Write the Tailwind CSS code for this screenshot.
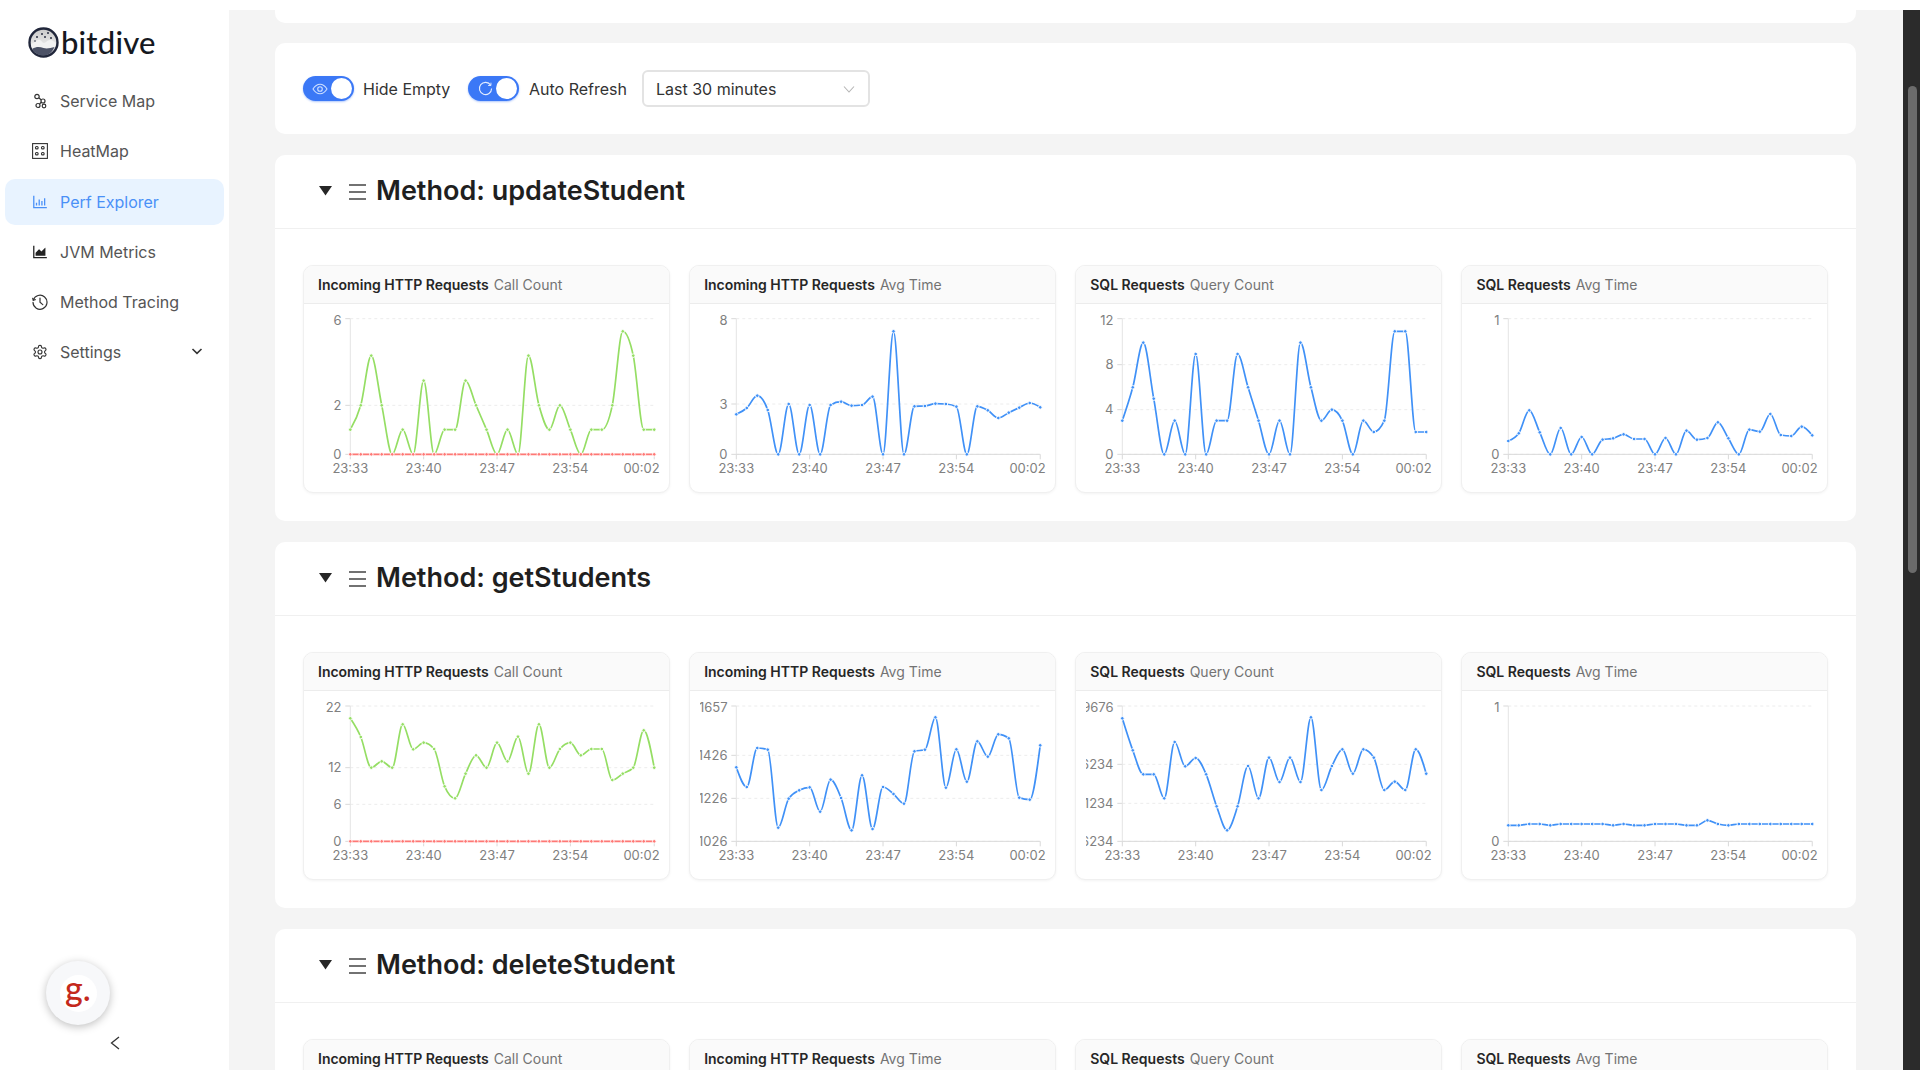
<!DOCTYPE html>
<html lang="en">
<head>
  <meta charset="UTF-8" />
  <title>bitdive - Perf Explorer</title>
  <script src="https://cdn.jsdelivr.net/npm/@tailwindcss/browser@4"></script>
</head>
<body class="bg-white font-[Inter,sans-serif] overflow-hidden">
  <div class="flex w-[1920px] h-[1080px] relative">
    <!-- sidebar -->
    <aside class="w-[229px] shrink-0 h-[1070px] flex flex-col bg-white">
      <div class="h-[76px] flex items-center pl-[28px] pt-[8px] gap-[2px]">
        <svg width="31" height="31" viewBox="0 0 31 31">
          <defs>
            <linearGradient id="sky" x1="0" y1="0" x2="0" y2="1">
              <stop offset="0" stop-color="#c9c9c9" />
              <stop offset="0.55" stop-color="#e6e6e6" />
              <stop offset="1" stop-color="#6d7180" />
            </linearGradient>
          </defs>
          <circle cx="15.5" cy="15.5" r="14" fill="url(#sky)" stroke="#20263a" stroke-width="2.4" />
          <path d="M3 17c4-1 6-5 9-4 2 .7 2 3 4 3s3-3 6-3 4 2 6 3c-.5 7-6 12-12.500 12S3 24 3 17z" fill="#f2f2f2" />
          <path d="M4 22c5-3 8-2 11.500-1s7 0 11-1c-2 5-6 8.500-11 8.500S6 26 4 22z" fill="#4c5266" />
          <g fill="#2a2f42">
            <circle cx="9" cy="10" r="1" /><circle cx="14" cy="7" r="1" /><circle cx="20" cy="6" r="1" />
            <circle cx="23" cy="11" r="1" /><circle cx="17" cy="10" r="1" /><circle cx="7" cy="14" r="0.8" />
          </g>
        </svg>
        <span class="text-[31px] leading-none font-medium text-[#15181f] tracking-[0.2px] font-[Lato,sans-serif]">bitdive</span>
      </div>
      <nav class="flex flex-col gap-[4.3px] px-[5px] mt-[2px] text-[16px] text-[#555555]">
        <a class="h-[46px] flex items-center rounded-[10px] pl-[27px] gap-[12px]">
          <svg class="w-[16px] h-[16px]" viewBox="0 0 16 16" fill="none" stroke="#333" stroke-width="1.200">
            <circle cx="5" cy="3.500" r="2.200" /><circle cx="11" cy="8" r="2" /><circle cx="6" cy="12.500" r="2" /><circle cx="12" cy="13" r="1.800" />
            <path d="M6.800 4.800 9.300 7M9.300 9.300 7.500 11" />
          </svg>
          Service Map
        </a>
        <a class="h-[46px] flex items-center rounded-[10px] pl-[27px] gap-[12px]">
          <svg class="w-[16px] h-[16px]" viewBox="0 0 16 16" fill="none" stroke="#333" stroke-width="1.100">
            <rect x="0.600" y="0.600" width="14.800" height="14.800" />
            <rect x="3.500" y="3.500" width="2.600" height="2.400" rx="1" /><rect x="9.500" y="3.500" width="2.600" height="2.400" rx="1" />
            <rect x="3.500" y="9.500" width="2.600" height="2.400" rx="1" /><rect x="9.500" y="9.500" width="2.600" height="2.400" rx="1" />
          </svg>
          HeatMap
        </a>
        <a class="h-[46px] flex items-center rounded-[10px] pl-[27px] gap-[12px] bg-[#e8f3ff] text-[#4a90f7]">
          <svg class="w-[16px] h-[16px]" viewBox="64 64 896 896" fill="#4a90f7">
            <path d="M888 792H200V168c0-4.400-3.600-8-8-8h-56c-4.400 0-8 3.600-8 8v688c0 4.400 3.600 8 8 8h752c4.400 0 8-3.600 8-8v-56c0-4.400-3.600-8-8-8zm-600-80h56c4.400 0 8-3.600 8-8V560c0-4.400-3.600-8-8-8h-56c-4.400 0-8 3.600-8 8v144c0 4.400 3.600 8 8 8zm152 0h56c4.400 0 8-3.600 8-8V384c0-4.400-3.600-8-8-8h-56c-4.400 0-8 3.600-8 8v320c0 4.400 3.600 8 8 8zm152 0h56c4.400 0 8-3.600 8-8V462c0-4.400-3.600-8-8-8h-56c-4.400 0-8 3.600-8 8v242c0 4.400 3.600 8 8 8zm152 0h56c4.400 0 8-3.600 8-8V304c0-4.400-3.600-8-8-8h-56c-4.400 0-8 3.600-8 8v400c0 4.400 3.600 8 8 8z" />
          </svg>
          Perf Explorer
        </a>
        <a class="h-[46px] flex items-center rounded-[10px] pl-[27px] gap-[12px]">
          <svg class="w-[16px] h-[16px]" viewBox="64 64 896 896" fill="#222">
            <path d="M888 792H200V168c0-4.400-3.600-8-8-8h-56c-4.400 0-8 3.600-8 8v688c0 4.400 3.600 8 8 8h752c4.400 0 8-3.600 8-8v-56c0-4.400-3.600-8-8-8zm-616-64h536c4.400 0 8-3.600 8-8V284c0-7.200-8.700-10.700-13.700-5.700L592 488.600l-125.400-124a8.030 8.030 0 00-11.300 0l-189 189.600a7.870 7.870 0 00-2.300 5.600V720c0 4.400 3.600 8 8 8z" />
          </svg>
          JVM Metrics
        </a>
        <a class="h-[46px] flex items-center rounded-[10px] pl-[27px] gap-[12px]">
          <svg class="w-[16px] h-[16px]" viewBox="0 0 16 16" fill="none" stroke="#333" stroke-width="1.200" stroke-linecap="round">
            <path d="M1.300 6.200A7 7 0 1 1 1 8.300" /><path d="M1 3.400v3h3" stroke-width="0" /><path d="M8 4v4.200l2.800 2.400" />
            <path d="M0.700 4.300 1.300 6.200 3.300 5.600" />
          </svg>
          Method Tracing
        </a>
        <a class="h-[46px] flex items-center rounded-[10px] pl-[27px] gap-[12px]">
          <svg class="w-[16px] h-[16px]" viewBox="0 0 24 24" fill="none" stroke="#333" stroke-width="1.700" stroke-linecap="round" stroke-linejoin="round">
            <path d="M12.220 2h-.44a2 2 0 0 0-2 2v.18a2 2 0 0 1-1 1.730l-.43.250a2 2 0 0 1-2 0l-.15-.080a2 2 0 0 0-2.730.730l-.22.380a2 2 0 0 0 .73 2.730l.15.100a2 2 0 0 1 1 1.720v.510a2 2 0 0 1-1 1.740l-.15.090a2 2 0 0 0-.73 2.730l.22.380a2 2 0 0 0 2.730.730l.15-.080a2 2 0 0 1 2 0l.43.250a2 2 0 0 1 1 1.730V20a2 2 0 0 0 2 2h.44a2 2 0 0 0 2-2v-.18a2 2 0 0 1 1-1.730l.43-.250a2 2 0 0 1 2 0l.15.080a2 2 0 0 0 2.730-.730l.22-.390a2 2 0 0 0-.73-2.730l-.15-.080a2 2 0 0 1-1-1.740v-.500a2 2 0 0 1 1-1.740l.15-.090a2 2 0 0 0 .73-2.730l-.22-.380a2 2 0 0 0-2.730-.730l-.15.080a2 2 0 0 1-2 0l-.43-.250a2 2 0 0 1-1-1.730V4a2 2 0 0 0-2-2z" />
            <circle cx="12" cy="12" r="3" />
          </svg>
          Settings
          <svg class="w-[12px] h-[12px] ml-auto mr-[21px] -mt-[3px]" viewBox="0 0 12 12" fill="none" stroke="#333" stroke-width="1.600">
            <path d="M1.500 4 6 8.300 10.500 4" />
          </svg>
        </a>
      </nav>
      <button class="mt-auto mb-[20px] self-center ml-[1px] h-[14px]">
        <svg class="w-[10px] h-[14px]" viewBox="0 0 10 14" fill="none" stroke="#333" stroke-width="1.300"><path d="M9 1 1.500 7 9 13" /></svg>
      </button>
    </aside>

    <!-- floating avatar -->
    <div class="absolute left-[46px] top-[961px] w-[64px] h-[64px] rounded-full bg-[#f7f8fa] shadow-[0_2px_8px_rgba(0,0,0,0.25)] flex items-center justify-center">
      <div class="w-[37px] h-[37px] rounded-full bg-white flex items-center justify-center text-[#c4291c] text-[34px] font-medium leading-none pb-[10px] font-[Lato,sans-serif]">g.</div>
    </div>

    <!-- content -->
    <main class="flex-1 h-[1060px] mt-[10px] overflow-hidden bg-[#f4f4f4] pl-[46px] pr-[47px] flex flex-col gap-[21px]">
      <div class="shrink-0 h-[13px] bg-white rounded-b-[10px]"></div>
      <section class="shrink-0 -mt-[1px] h-[91px] bg-white rounded-[10px] flex items-center pl-[28px] text-[16px] text-[#333333]">
        <span class="w-[51px] h-[25px] rounded-full bg-[#3b78f6] relative flex items-center shadow-[0_1px_2px_rgba(59,120,246,0.4)]">
          <svg class="ml-[9px] w-[16px] h-[16px]" viewBox="0 0 16 16" fill="none" stroke="#cfe0ff" stroke-width="1.100">
            <path d="M1 8c2-3.200 4.300-4.800 7-4.800S13 4.800 15 8c-2 3.200-4.300 4.800-7 4.800S3 11.200 1 8z" /><circle cx="8" cy="8" r="2.300" />
          </svg>
          <span class="absolute right-[2px] top-[2px] w-[21px] h-[21px] rounded-full bg-white"></span>
        </span>
        <span class="ml-[9px] w-[96px]">Hide Empty</span>
        <span class="ml-[9px] w-[51px] h-[25px] rounded-full bg-[#3b78f6] relative flex items-center shadow-[0_1px_2px_rgba(59,120,246,0.4)]">
          <svg class="ml-[10px] w-[15px] h-[15px]" viewBox="0 0 16 16" fill="none" stroke="#e3edff" stroke-width="1.200">
            <path d="M13.500 4.500A6.500 6.500 0 1 0 14.500 8" /><path d="M13.800 1.800v3h-3" stroke-width="1" />
          </svg>
          <span class="absolute right-[2px] top-[2px] w-[21px] h-[21px] rounded-full bg-white"></span>
        </span>
        <span class="ml-[10px] w-[113px]">Auto Refresh</span>
        <span class="w-[228px] h-[37px] rounded-[6px] border-2 border-[#e3e3e3] flex items-center pl-[12px] pr-[13px] justify-between">
          Last 30 minutes
          <svg class="w-[12px] h-[12px]" viewBox="0 0 12 12" fill="none" stroke="#b5b5b5" stroke-width="1.100"><path d="M1 3.500 6 9l5-5.500" /></svg>
        </span>
      </section>
      <div id="methods" class="contents"></div>
    </main>

    <!-- window scrollbar -->
    <div class="w-[17px] h-[1060px] mt-[10px] bg-[#2b2b2b] pt-[76px] pl-[5px]">
      <div class="w-[9px] h-[487px] rounded-full bg-[#6b6b6b]"></div>
    </div>
  </div>

  <script>
    const TIMES = [[0, '23:33'], [7, '23:40'], [14, '23:47'], [21, '23:54'], [29, '00:02']];
    const X0 = 46.3, DX = 10.48;

    // y values are pixel rows read off the reference (3x), per chart
    const ROW1 = [
      { title: 'Incoming HTTP Requests', sub: 'Call Count', color: '#95de64', red: 612,
        ticks: [['6', 205], ['2', 465], ['0', 612]],
        ys: [538,465,316,465,612,538,612,391,612,538,538,391,465,538,612,538,612,316,465,538,465,538,612,538,538,465,243,316,538,538] },
      { title: 'Incoming HTTP Requests', sub: 'Avg Time', color: '#4091f7',
        ticks: [['8', 205], ['3', 461], ['0', 612]],
        ys: [492,473,436,479,612,461,612,464,612,464,454,466,464,439,612,243,612,468,467,460,461,469,612,468,480,503,487,472,458,471] },
      { title: 'SQL Requests', sub: 'Query Count', color: '#4091f7',
        ticks: [['12', 205], ['8', 343], ['4', 478], ['0', 612]],
        ys: [511,411,277,445,612,511,612,311,612,511,511,311,411,511,612,511,612,277,411,511,478,511,612,511,545,511,243,243,545,545] },
      { title: 'SQL Requests', sub: 'Avg Time', color: '#4091f7',
        ticks: [['1', 205], ['0', 612]],
        ys: [572,549,480,546,612,533,612,560,612,568,564,552,566,566,612,563,612,541,568,563,516,564,612,538,544,491,554,557,529,555] },
    ];
    const ROW2 = [
      { title: 'Incoming HTTP Requests', sub: 'Call Count', color: '#95de64', red: 601,
        ticks: [['22', 195], ['12', 380], ['6', 490], ['0', 601]],
        ys: [232,288,380,361,380,250,325,305,324,436,472,398,343,380,305,361,287,398,250,380,324,305,343,324,324,417,398,380,268,380] },
      { title: 'Incoming HTTP Requests', sub: 'Avg Time', color: '#4091f7',
        ticks: [['1657', 195], ['1426', 343], ['1226', 472], ['1026', 601]],
        ys: [379,438,321,326,560,473,448,439,512,416,471,568,403,564,438,459,488,331,326,229,440,325,422,301,347,280,292,470,476,313] },
      { title: 'SQL Requests', sub: 'Query Count', color: '#4091f7',
        ticks: [['39676', 195], ['26234', 370], ['21234', 487], ['16234', 601]],
        ys: [232,328,400,400,472,303,376,351,400,496,568,496,375,472,350,423,350,423,229,447,375,325,398,325,350,447,422,447,325,398] },
      { title: 'SQL Requests', sub: 'Avg Time', color: '#4091f7',
        ticks: [['1', 195], ['0', 601]],
        ys: [553,553,549,549,553,549,549,549,549,549,553,549,553,553,549,549,549,553,553,538,549,553,549,549,549,549,549,549,549,549] },
    ];

    // same curve as d3 curveMonotoneX
    function monotone(pts) {
      const n = pts.length, s = [], t = [];
      for (let i = 0; i < n - 1; i++) s[i] = (pts[i + 1][1] - pts[i][1]) / (pts[i + 1][0] - pts[i][0]);
      for (let i = 1; i < n - 1; i++) {
        const h0 = pts[i][0] - pts[i - 1][0], h1 = pts[i + 1][0] - pts[i][0];
        const p = (s[i - 1] * h1 + s[i] * h0) / (h0 + h1);
        t[i] = (Math.sign(s[i - 1]) + Math.sign(s[i])) * Math.min(Math.abs(s[i - 1]), Math.abs(s[i]), 0.5 * Math.abs(p)) || 0;
      }
      t[0] = (3 * s[0] - t[1]) / 2;
      t[n - 1] = (3 * s[n - 2] - t[n - 2]) / 2;
      let d = `M${pts[0][0]},${pts[0][1]}`;
      for (let i = 0; i < n - 1; i++) {
        const h = (pts[i + 1][0] - pts[i][0]) / 3;
        d += `C${pts[i][0] + h},${pts[i][1] + h * t[i]} ${pts[i + 1][0] - h},${pts[i + 1][1] - h * t[i + 1]} ${pts[i + 1][0]},${pts[i + 1][1]}`;
      }
      return d;
    }

    function series(ys, color, off) {
      const pts = ys.map((y, i) => [X0 + i * DX, (y - off) / 3]);
      const dots = pts.map(p => `<circle cx="${p[0]}" cy="${p[1]}" r="1.800" fill="${color}" stroke="#fff" stroke-width="0.900"/>`).join('');
      return `<path d="${monotone(pts)}" fill="none" stroke="${color}" stroke-width="1.700"/>${dots}`;
    }

    let clipId = 0;
    function chartSvg(c, off) {
      const yb = (c.ticks[c.ticks.length - 1][1] - off) / 3, xEnd = X0 + 29 * DX, id = `clip${clipId++}`;
      const grid = c.ticks.map(([, v]) => {
        const y = (v - off) / 3;
        return `<line x1="${X0}" x2="${xEnd}" y1="${y}" y2="${y}" stroke="#ececec" stroke-dasharray="3 3"/><line x1="${X0 - 5}" x2="${X0}" y1="${y}" y2="${y}" stroke="#d9d9d9"/>`;
      }).join('');
      const yLabels = c.ticks.map(([l, v], i) => `<text x="37.500" y="${(v - off) / 3 + (i === 0 ? 6 : 4.500)}" text-anchor="end" clip-path="url(#${id})">${l}</text>`).join('');
      const xLabels = TIMES.map(([i, l]) => {
        const x = X0 + i * DX;
        return `<line x1="${x}" x2="${x}" y1="${yb}" y2="${yb + 5}" stroke="#d9d9d9"/><text x="${i === 29 ? 355.700 : x}" y="${yb + 19}" text-anchor="${i === 29 ? 'end' : 'middle'}">${l}</text>`;
      }).join('');
      return `<svg width="366" height="188" class="block" font-size="13" fill="#808080">
        <defs><clipPath id="${id}"><rect x="10" y="0" width="40" height="188"/></clipPath></defs>
        ${grid}
        <line x1="${X0}" x2="${X0}" y1="${(c.ticks[0][1] - off) / 3}" y2="${yb}" stroke="#e4e4e4"/>
        <line x1="${X0}" x2="${xEnd}" y1="${yb}" y2="${yb}" stroke="#d9d9d9"/>
        ${xLabels}${yLabels}
        ${series(c.ys, c.color, off)}
        ${c.red ? series(c.ys.map(() => c.red), '#ff7875', off) : ''}
      </svg>`;
    }

    function chartCard(c, off) {
      return `<div class="rounded-[10px] border border-[#f0f0f0] bg-white shadow-[0_1px_3px_rgba(0,0,0,0.05)] overflow-hidden">
        <div class="h-[38px] bg-[#fafafa] border-b border-[#ececec] flex items-center pl-[14px] text-[14px]">
          <span class="font-semibold text-[#262626]">${c.title}</span><span class="ml-[5px] text-[#737373]">${c.sub}</span>
        </div>
        ${chartSvg(c, off)}
      </div>`;
    }

    function methodCard(name, row, off) {
      return `<section class="shrink-0 bg-white rounded-[10px]">
        <div class="h-[73px] border-b border-[#f0f0f0] flex items-center box-content">
          <svg class="ml-[44px] w-[13px] h-[10px] -mt-[2px]" viewBox="0 0 13 10" fill="#262626"><path d="M0 0h13L6.500 9.500z"/></svg>
          <svg class="ml-[17px] w-[17px] h-[16px]" viewBox="0 0 17 16" fill="none" stroke="#444" stroke-width="1.300"><path d="M0 1h17M0 8h17M0 15h17"/></svg>
          <h2 class="ml-[10px] text-[27px] font-semibold text-[#1f1f1f]">Method: ${name}</h2>
        </div>
        <div class="grid grid-cols-4 gap-[19.500px] px-[28px] pt-[36px] pb-[28px]">
          ${row.map(c => chartCard(c, off)).join('')}
        </div>
      </section>`;
    }

    document.getElementById('methods').innerHTML =
      methodCard('updateStudent', ROW1, 161) +
      methodCard('getStudents', ROW2, 150) +
      methodCard('deleteStudent', ROW1, 161);
  </script>
</body>
</html>
